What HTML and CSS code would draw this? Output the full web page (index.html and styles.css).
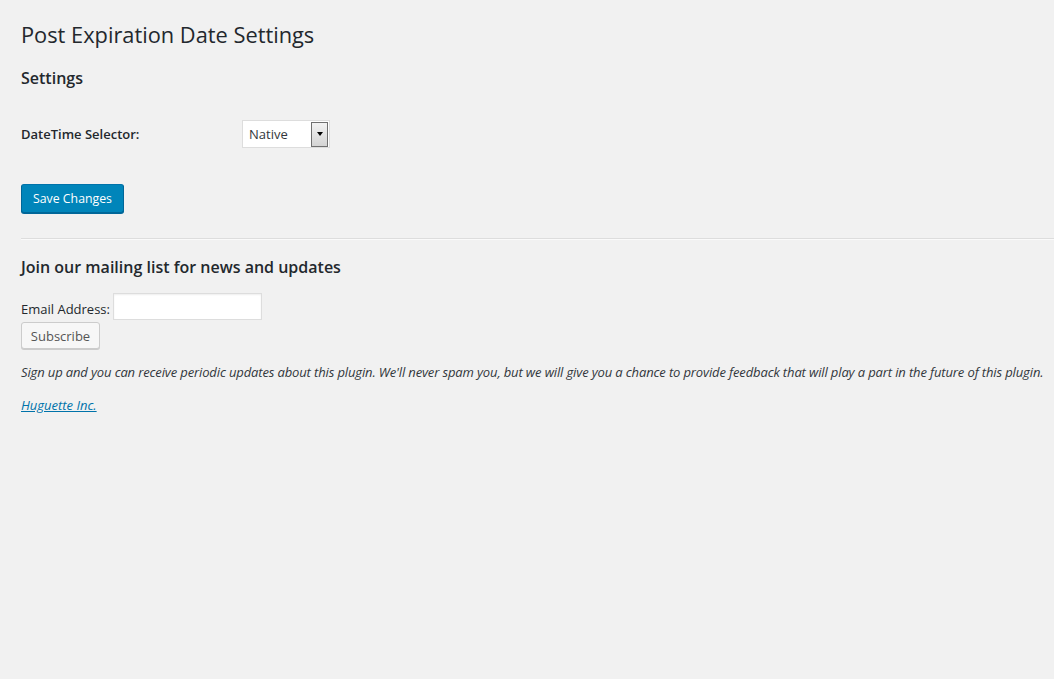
FILE: index.html
```html
<!DOCTYPE html>
<html>
<head>
<meta charset="utf-8">
<link rel="stylesheet" href="styles.css">
</head>
<body>
<div class="wrap">
  <h1 class="page-title">Post Expiration Date Settings</h1>
  <h2 class="section-title">Settings</h2>
  <div class="form-row">
    <label class="form-label">DateTime Selector:</label>
    <div class="select">
      <span class="select-value">Native</span>
      <span class="select-arrow"><span class="caret"></span></span>
    </div>
  </div>
  <div class="submit-row">
    <button class="btn-primary">Save Changes</button>
  </div>
  <hr class="divider">
  <h3 class="mail-title">Join our mailing list for news and updates</h3>
  <div class="email-row">
    <span class="email-label">Email Address:</span>
    <span class="email-input"></span>
  </div>
  <button class="btn-secondary">Subscribe</button>
  <p class="note">Sign up and you can receive periodic updates about this plugin. We'll never spam you, but we will give you a chance to provide feedback that will play a part in the future of this plugin.</p>
  <p class="credit"><a href="#">Huguette Inc.</a></p>
</div>
</body>
</html>
```
FILE: styles.css
```css
html, body {
  margin: 0;
  padding: 0;
  background: #f1f1f1;
}
body {
  color: #23282d;
  font-family: "Open Sans", "Noto Sans", sans-serif;
  font-size: 13px;
  line-height: 1.4;
  height: 679px;
}
.wrap {
  padding: 0 0 0 21px;
}
.page-title {
  font-size: 21.8px;
  font-weight: 400;
  line-height: 30px;
  margin: 0;
  padding: 20px 0 0 0;
}
.section-title {
  font-size: 16px;
  font-weight: 600;
  margin: 16px 0 0 0;
  line-height: 24px;
}
.form-row {
  display: flex;
  align-items: center;
  margin-top: 30px;
  height: 28px;
}
.form-label {
  width: 221px;
  font-size: 13px;
  font-weight: 600;
}
.select {
  display: flex;
  align-items: center;
  width: 86px;
  height: 26px;
  border: 1px solid #ddd;
  background: #fff;
  box-sizing: content-box;
}
.select-value {
  flex: 1;
  padding-left: 6px;
  font-size: 13px;
  color: #32373c;
}
.select-arrow {
  width: 15px;
  height: 23px;
  margin-right: 1px;
  border: 1px solid #707070;
  background: linear-gradient(#f2f2f2, #d4d4d4);
  display: flex;
  align-items: center;
  justify-content: center;
}
.caret {
  width: 0;
  height: 0;
  border-left: 3.5px solid transparent;
  border-right: 3.5px solid transparent;
  border-top: 4px solid #000;
}
.submit-row {
  margin-top: 36px;
}
.btn-primary {
  font-family: inherit;
  font-size: 12.3px;
  white-space: nowrap;
  height: 29px;
  padding: 0;
  background: #0085ba;
  border: 1px solid;
  border-color: #0073aa #006799 #006799;
  border-radius: 3px;
  color: #fff;
  box-shadow: 0 1px 0 #006799;
  width: 103px;
}
.divider {
  border: 0;
  border-top: 1px solid #ddd;
  border-bottom: 1px solid #fafafa;
  margin: 25px 0 0 0;
}
.mail-title {
  font-size: 16px;
  font-weight: 600;
  margin: 15px 0 0 0;
  line-height: 24px;
}
.email-row {
  display: flex;
  align-items: flex-end;
  margin-top: 14px;
}
.email-label {
  margin-right: 3px;
  padding-bottom: 2px;
}
.email-input {
  display: block;
  width: 147px;
  height: 25px;
  border: 1px solid #ddd;
  background: #fff;
  box-shadow: inset 0 1px 2px rgba(0,0,0,.07);
}
.btn-secondary {
  display: block;
  margin-top: 2px;
  font-family: inherit;
  font-size: 13px;
  color: #555;
  background: #f7f7f7;
  border: 1px solid #ccc;
  border-radius: 3px;
  box-shadow: 0 1px 0 #ccc;
  height: 27px;
  width: 79px;
  padding: 0;
}
.note {
  font-style: italic;
  margin: 14px 0 0 0;
  white-space: nowrap;
  letter-spacing: -0.13px;
  color: #32373c;
}
.credit {
  margin: 15px 0 0 0;
  font-style: italic;
}
.credit a {
  color: #0073aa;
}
```
